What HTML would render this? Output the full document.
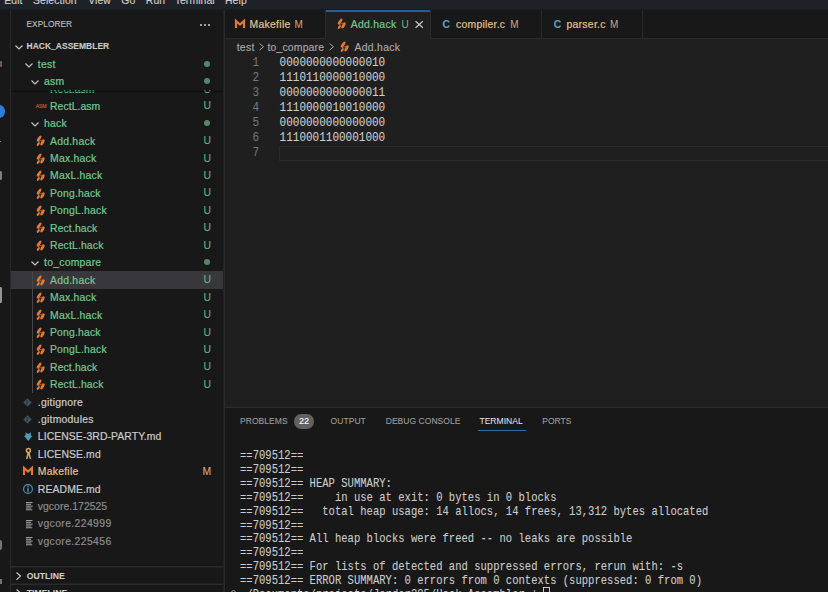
<!DOCTYPE html>
<html><head><meta charset="utf-8"><style>
*{margin:0;padding:0;box-sizing:border-box}
html,body{width:828px;height:592px;overflow:hidden;background:#181818;font-family:"Liberation Sans",sans-serif;}
.a{position:absolute}
.t{position:absolute;white-space:pre}
.mono{font-family:"Liberation Mono",monospace}
svg{position:absolute;overflow:visible}
</style></head><body>
<div class="a" style="left:0px;top:0px;width:828px;height:10px;background:#1e2125"></div>
<div class="a" style="left:0px;top:9px;width:828px;height:1px;background:#1b1d20"></div>
<div class="t" style="left:4.3px;top:-7.5px;font-size:10.4px;line-height:16px;color:#cccccc;letter-spacing:0.1px;-webkit-text-stroke:0.15px #cccccc">Edit</div>
<div class="t" style="left:33px;top:-7.5px;font-size:10.4px;line-height:16px;color:#cccccc;letter-spacing:0.1px;-webkit-text-stroke:0.15px #cccccc">Selection</div>
<div class="t" style="left:88.2px;top:-7.5px;font-size:10.4px;line-height:16px;color:#cccccc;letter-spacing:0.1px;-webkit-text-stroke:0.15px #cccccc">View</div>
<div class="t" style="left:121.3px;top:-7.5px;font-size:10.4px;line-height:16px;color:#cccccc;letter-spacing:0.1px;-webkit-text-stroke:0.15px #cccccc">Go</div>
<div class="t" style="left:145.8px;top:-7.5px;font-size:10.4px;line-height:16px;color:#cccccc;letter-spacing:0.1px;-webkit-text-stroke:0.15px #cccccc">Run</div>
<div class="t" style="left:174.7px;top:-7.5px;font-size:10.4px;line-height:16px;color:#cccccc;letter-spacing:0.1px;-webkit-text-stroke:0.15px #cccccc">Terminal</div>
<div class="t" style="left:225px;top:-7.5px;font-size:10.4px;line-height:16px;color:#cccccc;letter-spacing:0.1px;-webkit-text-stroke:0.15px #cccccc">Help</div>
<div class="a" style="left:10px;top:10px;width:1px;height:582px;background:#2b2b2b"></div>
<div class="a" style="left:0px;top:60.5px;width:1.6px;height:6.5px;background:#8a7a6a;border-radius:0 1px 1px 0;opacity:.7"></div>
<div class="a" style="left:-7.5px;top:105px;width:12.5px;height:12.5px;border-radius:50%;background:#2f7bd8"></div>
<div class="a" style="left:0px;top:141px;width:1.2px;height:1.2px;background:#c07030"></div>
<div class="a" style="left:0px;top:171.4px;width:2px;height:9px;background:#9a9a9a;border-radius:0 1.5px 1.5px 0;opacity:.8"></div>
<div class="a" style="left:0px;top:286.6px;width:2.2px;height:16.4px;background:#aaaaaa;border-radius:0 1px 1px 0;opacity:.85"></div>
<div class="a" style="left:0px;top:540px;width:2px;height:10px;background:#a89a8a;border-radius:0 3px 3px 0;opacity:.7"></div>
<div class="a" style="left:0px;top:578.5px;width:1.6px;height:5px;background:#999999;opacity:.7"></div>
<div class="a" style="left:223px;top:10px;width:1px;height:582px;background:#222222"></div>
<div class="a" style="left:224px;top:10px;width:1px;height:582px;background:#2b2b2b"></div>
<div class="t" style="left:26.5px;top:15.82px;font-size:8.3px;line-height:16px;color:#c0c0c0;letter-spacing:0.05px;-webkit-text-stroke:0.1px #c0c0c0">EXPLORER</div>
<div class="a" style="left:200.2px;top:23.6px;width:2px;height:2px;border-radius:50%;background:#cccccc"></div>
<div class="a" style="left:204.1px;top:23.6px;width:2px;height:2px;border-radius:50%;background:#cccccc"></div>
<div class="a" style="left:208px;top:23.6px;width:2px;height:2px;border-radius:50%;background:#cccccc"></div>
<svg style="left:14.6px;top:45.1px" width="8" height="4.5" viewBox="0 0 8 4.5"><path d="M0.5 0.5 L4 4 L7.5 0.5" fill="none" stroke="#c5c5c5" stroke-width="1.2"/></svg>
<div class="t" style="left:26.5px;top:38.37px;font-size:8.45px;line-height:16px;color:#cccccc;letter-spacing:0.05px;-webkit-text-stroke:0.1px #cccccc;font-weight:bold">HACK_ASSEMBLER</div>
<div class="t" style="left:50px;top:82.4px;font-size:10.4px;line-height:16px;color:#73c991;letter-spacing:0.07px;-webkit-text-stroke:0.2px #73c991">Rect.asm</div>
<div class="t" style="left:203.5px;top:81.9px;font-size:10.4px;line-height:16px;color:#73c991;-webkit-text-stroke:0.12px #73c991;opacity:.85">U</div>
<div class="t" style="left:35.8px;top:98px;font-size:5.2px;line-height:16px;color:#e37933;letter-spacing:-0.25px;-webkit-text-stroke:0.15px #e37933;opacity:.8">ASM</div>
<div class="t" style="left:50px;top:98.8px;font-size:10.4px;line-height:16px;color:#73c991;letter-spacing:0.07px;-webkit-text-stroke:0.2px #73c991">RectL.asm</div>
<div class="t" style="left:203.5px;top:98.3px;font-size:10.4px;line-height:16px;color:#73c991;-webkit-text-stroke:0.12px #73c991;opacity:.85">U</div>
<svg style="left:31px;top:122px" width="8" height="4.5" viewBox="0 0 8 4.5"><path d="M0.5 0.5 L4 4 L7.5 0.5" fill="none" stroke="#c5c5c5" stroke-width="1.2"/></svg>
<div class="t" style="left:44px;top:116.2px;font-size:10.4px;line-height:16px;color:#73c991;letter-spacing:0.25px;-webkit-text-stroke:0.2px #73c991">hack</div>
<div class="a" style="left:203.8px;top:120.1px;width:6px;height:6px;border-radius:50%;background:#73c991;opacity:.64"></div>
<svg style="left:32.9px;top:133.3px" width="16" height="16" viewBox="0 0 16 16"><g fill="#e37933"><ellipse cx="6.1" cy="5.6" rx="1.35" ry="3.5" transform="rotate(36 6.1 5.6)"/><ellipse cx="5.3" cy="11.0" rx="1.1" ry="2.2" transform="rotate(36 5.3 11.0)"/><ellipse cx="9.5" cy="9.4" rx="1.45" ry="3.4" transform="rotate(30 9.5 9.4)"/><path d="M5.0 8.7 L9.4 6.9" stroke="#e37933" stroke-width="1.0" opacity=".7"/></g></svg>
<div class="t" style="left:50px;top:133.6px;font-size:10.4px;line-height:16px;color:#73c991;letter-spacing:0.25px;-webkit-text-stroke:0.2px #73c991">Add.hack</div>
<div class="t" style="left:203.5px;top:133.1px;font-size:10.4px;line-height:16px;color:#73c991;-webkit-text-stroke:0.12px #73c991;opacity:.85">U</div>
<svg style="left:32.9px;top:150.7px" width="16" height="16" viewBox="0 0 16 16"><g fill="#e37933"><ellipse cx="6.1" cy="5.6" rx="1.35" ry="3.5" transform="rotate(36 6.1 5.6)"/><ellipse cx="5.3" cy="11.0" rx="1.1" ry="2.2" transform="rotate(36 5.3 11.0)"/><ellipse cx="9.5" cy="9.4" rx="1.45" ry="3.4" transform="rotate(30 9.5 9.4)"/><path d="M5.0 8.7 L9.4 6.9" stroke="#e37933" stroke-width="1.0" opacity=".7"/></g></svg>
<div class="t" style="left:50px;top:151px;font-size:10.4px;line-height:16px;color:#73c991;letter-spacing:0.25px;-webkit-text-stroke:0.2px #73c991">Max.hack</div>
<div class="t" style="left:203.5px;top:150.5px;font-size:10.4px;line-height:16px;color:#73c991;-webkit-text-stroke:0.12px #73c991;opacity:.85">U</div>
<svg style="left:32.9px;top:168.1px" width="16" height="16" viewBox="0 0 16 16"><g fill="#e37933"><ellipse cx="6.1" cy="5.6" rx="1.35" ry="3.5" transform="rotate(36 6.1 5.6)"/><ellipse cx="5.3" cy="11.0" rx="1.1" ry="2.2" transform="rotate(36 5.3 11.0)"/><ellipse cx="9.5" cy="9.4" rx="1.45" ry="3.4" transform="rotate(30 9.5 9.4)"/><path d="M5.0 8.7 L9.4 6.9" stroke="#e37933" stroke-width="1.0" opacity=".7"/></g></svg>
<div class="t" style="left:50px;top:168.4px;font-size:10.4px;line-height:16px;color:#73c991;letter-spacing:0.25px;-webkit-text-stroke:0.2px #73c991">MaxL.hack</div>
<div class="t" style="left:203.5px;top:167.9px;font-size:10.4px;line-height:16px;color:#73c991;-webkit-text-stroke:0.12px #73c991;opacity:.85">U</div>
<svg style="left:32.9px;top:185.5px" width="16" height="16" viewBox="0 0 16 16"><g fill="#e37933"><ellipse cx="6.1" cy="5.6" rx="1.35" ry="3.5" transform="rotate(36 6.1 5.6)"/><ellipse cx="5.3" cy="11.0" rx="1.1" ry="2.2" transform="rotate(36 5.3 11.0)"/><ellipse cx="9.5" cy="9.4" rx="1.45" ry="3.4" transform="rotate(30 9.5 9.4)"/><path d="M5.0 8.7 L9.4 6.9" stroke="#e37933" stroke-width="1.0" opacity=".7"/></g></svg>
<div class="t" style="left:50px;top:185.8px;font-size:10.4px;line-height:16px;color:#73c991;letter-spacing:0.18px;-webkit-text-stroke:0.2px #73c991">Pong.hack</div>
<div class="t" style="left:203.5px;top:185.3px;font-size:10.4px;line-height:16px;color:#73c991;-webkit-text-stroke:0.12px #73c991;opacity:.85">U</div>
<svg style="left:32.9px;top:202.9px" width="16" height="16" viewBox="0 0 16 16"><g fill="#e37933"><ellipse cx="6.1" cy="5.6" rx="1.35" ry="3.5" transform="rotate(36 6.1 5.6)"/><ellipse cx="5.3" cy="11.0" rx="1.1" ry="2.2" transform="rotate(36 5.3 11.0)"/><ellipse cx="9.5" cy="9.4" rx="1.45" ry="3.4" transform="rotate(30 9.5 9.4)"/><path d="M5.0 8.7 L9.4 6.9" stroke="#e37933" stroke-width="1.0" opacity=".7"/></g></svg>
<div class="t" style="left:50px;top:203.2px;font-size:10.4px;line-height:16px;color:#73c991;letter-spacing:0.19px;-webkit-text-stroke:0.2px #73c991">PongL.hack</div>
<div class="t" style="left:203.5px;top:202.7px;font-size:10.4px;line-height:16px;color:#73c991;-webkit-text-stroke:0.12px #73c991;opacity:.85">U</div>
<svg style="left:32.9px;top:220.3px" width="16" height="16" viewBox="0 0 16 16"><g fill="#e37933"><ellipse cx="6.1" cy="5.6" rx="1.35" ry="3.5" transform="rotate(36 6.1 5.6)"/><ellipse cx="5.3" cy="11.0" rx="1.1" ry="2.2" transform="rotate(36 5.3 11.0)"/><ellipse cx="9.5" cy="9.4" rx="1.45" ry="3.4" transform="rotate(30 9.5 9.4)"/><path d="M5.0 8.7 L9.4 6.9" stroke="#e37933" stroke-width="1.0" opacity=".7"/></g></svg>
<div class="t" style="left:50px;top:220.6px;font-size:10.4px;line-height:16px;color:#73c991;letter-spacing:0.13px;-webkit-text-stroke:0.2px #73c991">Rect.hack</div>
<div class="t" style="left:203.5px;top:220.1px;font-size:10.4px;line-height:16px;color:#73c991;-webkit-text-stroke:0.12px #73c991;opacity:.85">U</div>
<svg style="left:32.9px;top:237.7px" width="16" height="16" viewBox="0 0 16 16"><g fill="#e37933"><ellipse cx="6.1" cy="5.6" rx="1.35" ry="3.5" transform="rotate(36 6.1 5.6)"/><ellipse cx="5.3" cy="11.0" rx="1.1" ry="2.2" transform="rotate(36 5.3 11.0)"/><ellipse cx="9.5" cy="9.4" rx="1.45" ry="3.4" transform="rotate(30 9.5 9.4)"/><path d="M5.0 8.7 L9.4 6.9" stroke="#e37933" stroke-width="1.0" opacity=".7"/></g></svg>
<div class="t" style="left:50px;top:238px;font-size:10.4px;line-height:16px;color:#73c991;letter-spacing:0.15px;-webkit-text-stroke:0.2px #73c991">RectL.hack</div>
<div class="t" style="left:203.5px;top:237.5px;font-size:10.4px;line-height:16px;color:#73c991;-webkit-text-stroke:0.12px #73c991;opacity:.85">U</div>
<svg style="left:31px;top:261.2px" width="8" height="4.5" viewBox="0 0 8 4.5"><path d="M0.5 0.5 L4 4 L7.5 0.5" fill="none" stroke="#c5c5c5" stroke-width="1.2"/></svg>
<div class="t" style="left:44px;top:255.4px;font-size:10.4px;line-height:16px;color:#73c991;letter-spacing:0.25px;-webkit-text-stroke:0.2px #73c991">to_compare</div>
<div class="a" style="left:203.8px;top:259.3px;width:6px;height:6px;border-radius:50%;background:#73c991;opacity:.64"></div>
<div class="a" style="left:11px;top:271.1px;width:212px;height:18px;background:#37373c"></div>
<svg style="left:32.9px;top:272.5px" width="16" height="16" viewBox="0 0 16 16"><g fill="#e37933"><ellipse cx="6.1" cy="5.6" rx="1.35" ry="3.5" transform="rotate(36 6.1 5.6)"/><ellipse cx="5.3" cy="11.0" rx="1.1" ry="2.2" transform="rotate(36 5.3 11.0)"/><ellipse cx="9.5" cy="9.4" rx="1.45" ry="3.4" transform="rotate(30 9.5 9.4)"/><path d="M5.0 8.7 L9.4 6.9" stroke="#e37933" stroke-width="1.0" opacity=".7"/></g></svg>
<div class="t" style="left:50px;top:272.8px;font-size:10.4px;line-height:16px;color:#73c991;letter-spacing:0.25px;-webkit-text-stroke:0.2px #73c991">Add.hack</div>
<div class="t" style="left:203.5px;top:272.3px;font-size:10.4px;line-height:16px;color:#73c991;-webkit-text-stroke:0.12px #73c991;opacity:.85">U</div>
<svg style="left:32.9px;top:289.9px" width="16" height="16" viewBox="0 0 16 16"><g fill="#e37933"><ellipse cx="6.1" cy="5.6" rx="1.35" ry="3.5" transform="rotate(36 6.1 5.6)"/><ellipse cx="5.3" cy="11.0" rx="1.1" ry="2.2" transform="rotate(36 5.3 11.0)"/><ellipse cx="9.5" cy="9.4" rx="1.45" ry="3.4" transform="rotate(30 9.5 9.4)"/><path d="M5.0 8.7 L9.4 6.9" stroke="#e37933" stroke-width="1.0" opacity=".7"/></g></svg>
<div class="t" style="left:50px;top:290.2px;font-size:10.4px;line-height:16px;color:#73c991;letter-spacing:0.25px;-webkit-text-stroke:0.2px #73c991">Max.hack</div>
<div class="t" style="left:203.5px;top:289.7px;font-size:10.4px;line-height:16px;color:#73c991;-webkit-text-stroke:0.12px #73c991;opacity:.85">U</div>
<svg style="left:32.9px;top:307.3px" width="16" height="16" viewBox="0 0 16 16"><g fill="#e37933"><ellipse cx="6.1" cy="5.6" rx="1.35" ry="3.5" transform="rotate(36 6.1 5.6)"/><ellipse cx="5.3" cy="11.0" rx="1.1" ry="2.2" transform="rotate(36 5.3 11.0)"/><ellipse cx="9.5" cy="9.4" rx="1.45" ry="3.4" transform="rotate(30 9.5 9.4)"/><path d="M5.0 8.7 L9.4 6.9" stroke="#e37933" stroke-width="1.0" opacity=".7"/></g></svg>
<div class="t" style="left:50px;top:307.6px;font-size:10.4px;line-height:16px;color:#73c991;letter-spacing:0.25px;-webkit-text-stroke:0.2px #73c991">MaxL.hack</div>
<div class="t" style="left:203.5px;top:307.1px;font-size:10.4px;line-height:16px;color:#73c991;-webkit-text-stroke:0.12px #73c991;opacity:.85">U</div>
<svg style="left:32.9px;top:324.7px" width="16" height="16" viewBox="0 0 16 16"><g fill="#e37933"><ellipse cx="6.1" cy="5.6" rx="1.35" ry="3.5" transform="rotate(36 6.1 5.6)"/><ellipse cx="5.3" cy="11.0" rx="1.1" ry="2.2" transform="rotate(36 5.3 11.0)"/><ellipse cx="9.5" cy="9.4" rx="1.45" ry="3.4" transform="rotate(30 9.5 9.4)"/><path d="M5.0 8.7 L9.4 6.9" stroke="#e37933" stroke-width="1.0" opacity=".7"/></g></svg>
<div class="t" style="left:50px;top:325px;font-size:10.4px;line-height:16px;color:#73c991;letter-spacing:0.18px;-webkit-text-stroke:0.2px #73c991">Pong.hack</div>
<div class="t" style="left:203.5px;top:324.5px;font-size:10.4px;line-height:16px;color:#73c991;-webkit-text-stroke:0.12px #73c991;opacity:.85">U</div>
<svg style="left:32.9px;top:342.1px" width="16" height="16" viewBox="0 0 16 16"><g fill="#e37933"><ellipse cx="6.1" cy="5.6" rx="1.35" ry="3.5" transform="rotate(36 6.1 5.6)"/><ellipse cx="5.3" cy="11.0" rx="1.1" ry="2.2" transform="rotate(36 5.3 11.0)"/><ellipse cx="9.5" cy="9.4" rx="1.45" ry="3.4" transform="rotate(30 9.5 9.4)"/><path d="M5.0 8.7 L9.4 6.9" stroke="#e37933" stroke-width="1.0" opacity=".7"/></g></svg>
<div class="t" style="left:50px;top:342.4px;font-size:10.4px;line-height:16px;color:#73c991;letter-spacing:0.19px;-webkit-text-stroke:0.2px #73c991">PongL.hack</div>
<div class="t" style="left:203.5px;top:341.9px;font-size:10.4px;line-height:16px;color:#73c991;-webkit-text-stroke:0.12px #73c991;opacity:.85">U</div>
<svg style="left:32.9px;top:359.5px" width="16" height="16" viewBox="0 0 16 16"><g fill="#e37933"><ellipse cx="6.1" cy="5.6" rx="1.35" ry="3.5" transform="rotate(36 6.1 5.6)"/><ellipse cx="5.3" cy="11.0" rx="1.1" ry="2.2" transform="rotate(36 5.3 11.0)"/><ellipse cx="9.5" cy="9.4" rx="1.45" ry="3.4" transform="rotate(30 9.5 9.4)"/><path d="M5.0 8.7 L9.4 6.9" stroke="#e37933" stroke-width="1.0" opacity=".7"/></g></svg>
<div class="t" style="left:50px;top:359.8px;font-size:10.4px;line-height:16px;color:#73c991;letter-spacing:0.13px;-webkit-text-stroke:0.2px #73c991">Rect.hack</div>
<div class="t" style="left:203.5px;top:359.3px;font-size:10.4px;line-height:16px;color:#73c991;-webkit-text-stroke:0.12px #73c991;opacity:.85">U</div>
<svg style="left:32.9px;top:376.9px" width="16" height="16" viewBox="0 0 16 16"><g fill="#e37933"><ellipse cx="6.1" cy="5.6" rx="1.35" ry="3.5" transform="rotate(36 6.1 5.6)"/><ellipse cx="5.3" cy="11.0" rx="1.1" ry="2.2" transform="rotate(36 5.3 11.0)"/><ellipse cx="9.5" cy="9.4" rx="1.45" ry="3.4" transform="rotate(30 9.5 9.4)"/><path d="M5.0 8.7 L9.4 6.9" stroke="#e37933" stroke-width="1.0" opacity=".7"/></g></svg>
<div class="t" style="left:50px;top:377.2px;font-size:10.4px;line-height:16px;color:#73c991;letter-spacing:0.15px;-webkit-text-stroke:0.2px #73c991">RectL.hack</div>
<div class="t" style="left:203.5px;top:376.7px;font-size:10.4px;line-height:16px;color:#73c991;-webkit-text-stroke:0.12px #73c991;opacity:.85">U</div>
<div class="a" style="left:32px;top:271.7px;width:1px;height:121.8px;background:#474747"></div>
<svg style="left:23.3px;top:397.69999999999993px" width="9" height="9" viewBox="0 0 9 9"><path d="M4.5 0.3 L8.7 4.5 L4.5 8.7 L0.3 4.5 Z" fill="#41535b"/><path d="M3.6 2.2 L5.2 3.8 M4.0 3.6 L4.0 6.6" stroke="#1a1a1a" stroke-width="0.8" fill="none"/></svg>
<div class="t" style="left:37.8px;top:394.6px;font-size:10.4px;line-height:16px;color:#cccccc;letter-spacing:0.25px;-webkit-text-stroke:0.2px #cccccc">.gitignore</div>
<svg style="left:23.3px;top:415.09999999999997px" width="9" height="9" viewBox="0 0 9 9"><path d="M4.5 0.3 L8.7 4.5 L4.5 8.7 L0.3 4.5 Z" fill="#41535b"/><path d="M3.6 2.2 L5.2 3.8 M4.0 3.6 L4.0 6.6" stroke="#1a1a1a" stroke-width="0.8" fill="none"/></svg>
<div class="t" style="left:37.8px;top:412px;font-size:10.4px;line-height:16px;color:#cccccc;letter-spacing:0.25px;-webkit-text-stroke:0.2px #cccccc">.gitmodules</div>
<svg style="left:23.7px;top:431.99999999999994px" width="8.4" height="9" viewBox="0 0 8.4 9"><path d="M1.6 0.2 L4.2 2.0 L6.8 0.2 L6.9 3.6 L8.3 4.0 L4.2 8.9 L0.1 4.0 L1.5 3.6 Z" fill="#519aba"/></svg>
<div class="t" style="left:37.8px;top:429.4px;font-size:10.4px;line-height:16px;color:#cccccc;letter-spacing:0.09px;-webkit-text-stroke:0.2px #cccccc">LICENSE-3RD-PARTY.md</div>
<svg style="left:24.5px;top:448.2px" width="7" height="12" viewBox="0 0 7 12"><circle cx="3.4" cy="2.6" r="2.0" fill="none" stroke="#d2a862" stroke-width="1.5"/><path d="M2.4 4.4 L0.9 11.4 L2.8 10.6 L3.6 6.8 L4.6 10.6 L6.3 11.4 L4.6 4.4 Z" fill="#d2a862"/></svg>
<div class="t" style="left:37.8px;top:446.8px;font-size:10.4px;line-height:16px;color:#cccccc;letter-spacing:0.12px;-webkit-text-stroke:0.2px #cccccc">LICENSE.md</div>
<svg style="left:23.2px;top:467.3px" width="10" height="8" viewBox="0 0 10 8"><path d="M1 7.9 L1 0.9 L5 4.6 L9 0.9 L9 7.9" fill="none" stroke="#e37933" stroke-width="2.1" stroke-linejoin="miter"/></svg>
<div class="t" style="left:37.8px;top:464.2px;font-size:10.4px;line-height:16px;color:#e2c08d;letter-spacing:0.25px;-webkit-text-stroke:0.2px #e2c08d">Makefile</div>
<div class="t" style="left:202.6px;top:463.7px;font-size:10.4px;line-height:16px;color:#e2c08d;-webkit-text-stroke:0.12px #e2c08d;opacity:.85">M</div>
<svg style="left:22.8px;top:483.79999999999995px" width="10" height="10" viewBox="0 0 10 10"><circle cx="5" cy="5" r="4.4" fill="none" stroke="#519aba" stroke-width="1.1"/><rect x="4.3" y="4.2" width="1.4" height="3.6" fill="#519aba"/><rect x="4.3" y="2.1" width="1.4" height="1.3" fill="#519aba"/></svg>
<div class="t" style="left:37.8px;top:481.6px;font-size:10.4px;line-height:16px;color:#cccccc;letter-spacing:0.12px;-webkit-text-stroke:0.2px #cccccc">README.md</div>
<svg style="left:26.2px;top:502.29999999999995px" width="7" height="8.5" viewBox="0 0 7 8.5" fill="#9a9a9a"><rect x="0" y="0" width="6.5" height="1.1"/><rect x="0" y="1.8" width="5" height="1.1"/><rect x="0" y="3.6" width="6.7" height="1.1"/><rect x="0" y="5.4" width="5.3" height="1.1"/><rect x="0" y="7.2" width="6.2" height="1.1"/></svg>
<div class="t" style="left:37.8px;top:499px;font-size:10.4px;line-height:16px;color:#8c8c8c;letter-spacing:0.05px;-webkit-text-stroke:0.2px #8c8c8c">vgcore.172525</div>
<svg style="left:26.2px;top:519.6999999999999px" width="7" height="8.5" viewBox="0 0 7 8.5" fill="#9a9a9a"><rect x="0" y="0" width="6.5" height="1.1"/><rect x="0" y="1.8" width="5" height="1.1"/><rect x="0" y="3.6" width="6.7" height="1.1"/><rect x="0" y="5.4" width="5.3" height="1.1"/><rect x="0" y="7.2" width="6.2" height="1.1"/></svg>
<div class="t" style="left:37.8px;top:516.4px;font-size:10.4px;line-height:16px;color:#8c8c8c;letter-spacing:0.39px;-webkit-text-stroke:0.2px #8c8c8c">vgcore.224999</div>
<svg style="left:26.2px;top:537.0999999999999px" width="7" height="8.5" viewBox="0 0 7 8.5" fill="#9a9a9a"><rect x="0" y="0" width="6.5" height="1.1"/><rect x="0" y="1.8" width="5" height="1.1"/><rect x="0" y="3.6" width="6.7" height="1.1"/><rect x="0" y="5.4" width="5.3" height="1.1"/><rect x="0" y="7.2" width="6.2" height="1.1"/></svg>
<div class="t" style="left:37.8px;top:533.8px;font-size:10.4px;line-height:16px;color:#8c8c8c;letter-spacing:0.39px;-webkit-text-stroke:0.2px #8c8c8c">vgcore.225456</div>
<div class="a" style="left:11px;top:55px;width:212px;height:35px;background:#181818"></div>
<div class="a" style="left:11px;top:91px;width:212px;height:1px;background:#0a0a0a;opacity:.55"></div>
<div class="a" style="left:11px;top:90px;width:212px;height:1px;background:#0a0a0a;opacity:.2"></div>
<svg style="left:24.8px;top:62.5px" width="8" height="4.5" viewBox="0 0 8 4.5"><path d="M0.5 0.5 L4 4 L7.5 0.5" fill="none" stroke="#c5c5c5" stroke-width="1.2"/></svg>
<div class="t" style="left:37.8px;top:56.7px;font-size:10.4px;line-height:16px;color:#73c991;letter-spacing:0.25px;-webkit-text-stroke:0.2px #73c991">test</div>
<div class="a" style="left:203.8px;top:60.6px;width:6px;height:6px;border-radius:50%;background:#73c991;opacity:.64"></div>
<svg style="left:31px;top:79.8px" width="8" height="4.5" viewBox="0 0 8 4.5"><path d="M0.5 0.5 L4 4 L7.5 0.5" fill="none" stroke="#c5c5c5" stroke-width="1.2"/></svg>
<div class="t" style="left:44px;top:74px;font-size:10.4px;line-height:16px;color:#73c991;letter-spacing:0.25px;-webkit-text-stroke:0.2px #73c991">asm</div>
<div class="a" style="left:203.8px;top:77.9px;width:6px;height:6px;border-radius:50%;background:#73c991;opacity:.64"></div>
<div class="a" style="left:11px;top:566px;width:212px;height:1px;background:#2b2b2b"></div>
<div class="a" style="left:11px;top:567px;width:212px;height:1px;background:#202020"></div>
<svg style="left:16.3px;top:571.7px" width="5" height="8.2" viewBox="0 0 5 8.2"><path d="M0.5 0.5 L4.5 4.1 L0.5 7.7" fill="none" stroke="#c5c5c5" stroke-width="1.2"/></svg>
<div class="t" style="left:26.7px;top:567.82px;font-size:8.6px;line-height:16px;color:#cccccc;letter-spacing:0.05px;-webkit-text-stroke:0.1px #cccccc;font-weight:bold">OUTLINE</div>
<div class="a" style="left:11px;top:583px;width:212px;height:1px;background:#202020"></div>
<div class="a" style="left:11px;top:584px;width:212px;height:1px;background:#2b2b2b"></div>
<svg style="left:16.3px;top:588.6px" width="5" height="8.2" viewBox="0 0 5 8.2"><path d="M0.5 0.5 L4.5 4.1 L0.5 7.7" fill="none" stroke="#c5c5c5" stroke-width="1.2"/></svg>
<div class="t" style="left:26.7px;top:584.72px;font-size:8.6px;line-height:16px;color:#cccccc;letter-spacing:0.05px;-webkit-text-stroke:0.1px #cccccc;font-weight:bold">TIMELINE</div>
<div class="a" style="left:225px;top:10px;width:604px;height:397.5px;background:#1f1f1f"></div>
<div class="a" style="left:225px;top:10px;width:604px;height:27.7px;background:#181818"></div>
<div class="a" style="left:225px;top:38px;width:604px;height:1px;background:#2b2b2b"></div>
<div class="a" style="left:325px;top:10px;width:1px;height:28px;background:#2b2b2b"></div>
<div class="a" style="left:430px;top:10px;width:1px;height:28px;background:#2b2b2b"></div>
<div class="a" style="left:541px;top:10px;width:1px;height:28px;background:#2b2b2b"></div>
<div class="a" style="left:642px;top:10px;width:1px;height:28px;background:#2b2b2b"></div>
<svg style="left:234.7px;top:19.7px" width="10" height="8" viewBox="0 0 10 8"><path d="M1 7.9 L1 0.9 L5 4.6 L9 0.9 L9 7.9" fill="none" stroke="#e37933" stroke-width="2.2" stroke-linejoin="miter"/></svg>
<div class="t" style="left:249.5px;top:16.7px;font-size:10.4px;line-height:16px;color:#e2c08d;letter-spacing:0.3px;-webkit-text-stroke:0.2px #e2c08d">Makefile</div>
<div class="t" style="left:294.6px;top:16.84px;font-size:10px;line-height:16px;color:#e2c08d;-webkit-text-stroke:0.02px #e2c08d;opacity:.85">M</div>
<div class="a" style="left:326px;top:10px;width:104px;height:29px;background:#1f1f1f"></div>
<div class="a" style="left:326px;top:10px;width:104px;height:2px;background:#2d5b92"></div>
<svg style="left:334px;top:16.2px" width="16" height="16" viewBox="0 0 16 16"><g fill="#e37933"><ellipse cx="6.1" cy="5.6" rx="1.35" ry="3.5" transform="rotate(36 6.1 5.6)"/><ellipse cx="5.3" cy="11.0" rx="1.1" ry="2.2" transform="rotate(36 5.3 11.0)"/><ellipse cx="9.5" cy="9.4" rx="1.45" ry="3.4" transform="rotate(30 9.5 9.4)"/><path d="M5.0 8.7 L9.4 6.9" stroke="#e37933" stroke-width="1.0" opacity=".7"/></g></svg>
<div class="t" style="left:350.7px;top:16.7px;font-size:10.4px;line-height:16px;color:#73c991;letter-spacing:0.3px;-webkit-text-stroke:0.2px #73c991">Add.hack</div>
<div class="t" style="left:401.5px;top:16.84px;font-size:10px;line-height:16px;color:#73c991;-webkit-text-stroke:0.02px #73c991;opacity:.9">U</div>
<svg style="left:415px;top:21px" width="8.4" height="7" viewBox="0 0 8.4 7"><path d="M0.6 0.3 L7.8 6.7 M7.8 0.3 L0.6 6.7" stroke="#cccccc" stroke-width="1.15"/></svg>
<div class="t" style="left:442.4px;top:16.7px;font-size:10.4px;line-height:16px;color:#5aa2c8;-webkit-text-stroke:0.05px #5aa2c8;font-weight:bold">C</div>
<div class="t" style="left:456px;top:16.7px;font-size:10.4px;line-height:16px;color:#e2c08d;letter-spacing:0.25px;-webkit-text-stroke:0.2px #e2c08d">compiler.c</div>
<div class="t" style="left:510.2px;top:16.84px;font-size:10px;line-height:16px;color:#e2c08d;-webkit-text-stroke:0.02px #e2c08d;opacity:.85">M</div>
<div class="t" style="left:553.8px;top:16.7px;font-size:10.4px;line-height:16px;color:#5aa2c8;-webkit-text-stroke:0.05px #5aa2c8;font-weight:bold">C</div>
<div class="t" style="left:566.4px;top:16.7px;font-size:10.4px;line-height:16px;color:#e2c08d;letter-spacing:0.3px;-webkit-text-stroke:0.2px #e2c08d">parser.c</div>
<div class="t" style="left:609.9px;top:16.84px;font-size:10px;line-height:16px;color:#e2c08d;-webkit-text-stroke:0.02px #e2c08d;opacity:.85">M</div>
<div class="t" style="left:236.7px;top:39.6px;font-size:10.4px;line-height:16px;color:#a9a9a9;letter-spacing:0.3px;-webkit-text-stroke:0.15px #a9a9a9">test</div>
<svg style="left:258.6px;top:43.3px" width="5" height="7.6" viewBox="0 0 5 7.6"><path d="M0.5 0.5 L4.5 3.8 L0.5 7.1" fill="none" stroke="#a9a9a9" stroke-width="0.95"/></svg>
<div class="t" style="left:267.5px;top:39.6px;font-size:10.4px;line-height:16px;color:#a9a9a9;letter-spacing:0.18px;-webkit-text-stroke:0.15px #a9a9a9">to_compare</div>
<svg style="left:328.6px;top:43.3px" width="5" height="7.6" viewBox="0 0 5 7.6"><path d="M0.5 0.5 L4.5 3.8 L0.5 7.1" fill="none" stroke="#a9a9a9" stroke-width="0.95"/></svg>
<svg style="left:337px;top:39.4px" width="16" height="16" viewBox="0 0 16 16"><g fill="#e37933"><ellipse cx="6.1" cy="5.6" rx="1.35" ry="3.5" transform="rotate(36 6.1 5.6)"/><ellipse cx="5.3" cy="11.0" rx="1.1" ry="2.2" transform="rotate(36 5.3 11.0)"/><ellipse cx="9.5" cy="9.4" rx="1.45" ry="3.4" transform="rotate(30 9.5 9.4)"/><path d="M5.0 8.7 L9.4 6.9" stroke="#e37933" stroke-width="1.0" opacity=".7"/></g></svg>
<div class="t" style="left:354.5px;top:39.6px;font-size:10.4px;line-height:16px;color:#a9a9a9;letter-spacing:0.3px;-webkit-text-stroke:0.15px #a9a9a9">Add.hack</div>
<div class="t mono" style="left:233px;top:54.87px;font-size:11px;line-height:16px;color:#6e7681;-webkit-text-stroke:0.08px #6e7681;width:26px;text-align:right;transform:scaleY(1.13);transform-origin:0 10.93px">1</div>
<div class="t mono" style="left:279.6px;top:54.87px;font-size:11px;line-height:16px;color:#cccccc;-webkit-text-stroke:0.08px #cccccc;transform:scaleY(1.13);transform-origin:0 10.93px">0000000000000010</div>
<div class="t mono" style="left:233px;top:69.87px;font-size:11px;line-height:16px;color:#6e7681;-webkit-text-stroke:0.08px #6e7681;width:26px;text-align:right;transform:scaleY(1.13);transform-origin:0 10.93px">2</div>
<div class="t mono" style="left:279.6px;top:69.87px;font-size:11px;line-height:16px;color:#cccccc;-webkit-text-stroke:0.08px #cccccc;transform:scaleY(1.13);transform-origin:0 10.93px">1110110000010000</div>
<div class="t mono" style="left:233px;top:84.87px;font-size:11px;line-height:16px;color:#6e7681;-webkit-text-stroke:0.08px #6e7681;width:26px;text-align:right;transform:scaleY(1.13);transform-origin:0 10.93px">3</div>
<div class="t mono" style="left:279.6px;top:84.87px;font-size:11px;line-height:16px;color:#cccccc;-webkit-text-stroke:0.08px #cccccc;transform:scaleY(1.13);transform-origin:0 10.93px">0000000000000011</div>
<div class="t mono" style="left:233px;top:99.87px;font-size:11px;line-height:16px;color:#6e7681;-webkit-text-stroke:0.08px #6e7681;width:26px;text-align:right;transform:scaleY(1.13);transform-origin:0 10.93px">4</div>
<div class="t mono" style="left:279.6px;top:99.87px;font-size:11px;line-height:16px;color:#cccccc;-webkit-text-stroke:0.08px #cccccc;transform:scaleY(1.13);transform-origin:0 10.93px">1110000010010000</div>
<div class="t mono" style="left:233px;top:114.87px;font-size:11px;line-height:16px;color:#6e7681;-webkit-text-stroke:0.08px #6e7681;width:26px;text-align:right;transform:scaleY(1.13);transform-origin:0 10.93px">5</div>
<div class="t mono" style="left:279.6px;top:114.87px;font-size:11px;line-height:16px;color:#cccccc;-webkit-text-stroke:0.08px #cccccc;transform:scaleY(1.13);transform-origin:0 10.93px">0000000000000000</div>
<div class="t mono" style="left:233px;top:129.87px;font-size:11px;line-height:16px;color:#6e7681;-webkit-text-stroke:0.08px #6e7681;width:26px;text-align:right;transform:scaleY(1.13);transform-origin:0 10.93px">6</div>
<div class="t mono" style="left:279.6px;top:129.87px;font-size:11px;line-height:16px;color:#cccccc;-webkit-text-stroke:0.08px #cccccc;transform:scaleY(1.13);transform-origin:0 10.93px">1110001100001000</div>
<div class="t mono" style="left:233px;top:144.87px;font-size:11px;line-height:16px;color:#6e7681;-webkit-text-stroke:0.08px #6e7681;width:26px;text-align:right;transform:scaleY(1.13);transform-origin:0 10.93px">7</div>
<div class="a" style="left:279.3px;top:145.9px;width:560px;height:14.8px;border:1px solid #2a2a2a"></div>
<div class="a" style="left:225px;top:407px;width:604px;height:1px;background:#2b2b2b"></div>
<div class="a" style="left:225px;top:408px;width:604px;height:184px;background:#181818"></div>
<div class="t" style="left:240px;top:413.15px;font-size:8.5px;line-height:16px;color:#9d9d9d;letter-spacing:0.05px;-webkit-text-stroke:0.1px #9d9d9d">PROBLEMS</div>
<div class="a" style="left:294.4px;top:414.3px;width:19.4px;height:14.5px;border-radius:7.25px;background:#616161"></div>
<div class="t" style="left:294.4px;top:412.91px;font-size:9.2px;line-height:16px;color:#ffffff;-webkit-text-stroke:0.1px #ffffff;width:19.4px;text-align:center">22</div>
<div class="t" style="left:330.6px;top:413.15px;font-size:8.5px;line-height:16px;color:#9d9d9d;letter-spacing:0.05px;-webkit-text-stroke:0.1px #9d9d9d">OUTPUT</div>
<div class="t" style="left:385.7px;top:413.15px;font-size:8.5px;line-height:16px;color:#9d9d9d;letter-spacing:0.05px;-webkit-text-stroke:0.1px #9d9d9d">DEBUG CONSOLE</div>
<div class="t" style="left:479.4px;top:413.15px;font-size:8.5px;line-height:16px;color:#e7e7e7;letter-spacing:0.05px;-webkit-text-stroke:0.02px #e7e7e7">TERMINAL</div>
<div class="a" style="left:478px;top:430px;width:47.5px;height:1px;background:#3a679c"></div>
<div class="t" style="left:542.2px;top:413.15px;font-size:8.5px;line-height:16px;color:#9d9d9d;letter-spacing:0.05px;-webkit-text-stroke:0.1px #9d9d9d">PORTS</div>
<div class="t mono" style="left:240px;top:448.29px;font-size:10.55px;line-height:16px;color:#cccccc;-webkit-text-stroke:0.08px #cccccc;transform:scaleY(1.17);transform-origin:0 10.81px">==709512==</div>
<div class="t mono" style="left:240px;top:462.14px;font-size:10.55px;line-height:16px;color:#cccccc;-webkit-text-stroke:0.08px #cccccc;transform:scaleY(1.17);transform-origin:0 10.81px">==709512==</div>
<div class="t mono" style="left:240px;top:475.99px;font-size:10.55px;line-height:16px;color:#cccccc;-webkit-text-stroke:0.08px #cccccc;transform:scaleY(1.17);transform-origin:0 10.81px">==709512== HEAP SUMMARY:</div>
<div class="t mono" style="left:240px;top:489.84px;font-size:10.55px;line-height:16px;color:#cccccc;-webkit-text-stroke:0.08px #cccccc;transform:scaleY(1.17);transform-origin:0 10.81px">==709512==     in use at exit: 0 bytes in 0 blocks</div>
<div class="t mono" style="left:240px;top:503.69px;font-size:10.55px;line-height:16px;color:#cccccc;-webkit-text-stroke:0.08px #cccccc;transform:scaleY(1.17);transform-origin:0 10.81px">==709512==   total heap usage: 14 allocs, 14 frees, 13,312 bytes allocated</div>
<div class="t mono" style="left:240px;top:517.54px;font-size:10.55px;line-height:16px;color:#cccccc;-webkit-text-stroke:0.08px #cccccc;transform:scaleY(1.17);transform-origin:0 10.81px">==709512==</div>
<div class="t mono" style="left:240px;top:531.39px;font-size:10.55px;line-height:16px;color:#cccccc;-webkit-text-stroke:0.08px #cccccc;transform:scaleY(1.17);transform-origin:0 10.81px">==709512== All heap blocks were freed -- no leaks are possible</div>
<div class="t mono" style="left:240px;top:545.24px;font-size:10.55px;line-height:16px;color:#cccccc;-webkit-text-stroke:0.08px #cccccc;transform:scaleY(1.17);transform-origin:0 10.81px">==709512==</div>
<div class="t mono" style="left:240px;top:559.09px;font-size:10.55px;line-height:16px;color:#cccccc;-webkit-text-stroke:0.08px #cccccc;transform:scaleY(1.17);transform-origin:0 10.81px">==709512== For lists of detected and suppressed errors, rerun with: -s</div>
<div class="t mono" style="left:240px;top:572.94px;font-size:10.55px;line-height:16px;color:#cccccc;-webkit-text-stroke:0.08px #cccccc;transform:scaleY(1.17);transform-origin:0 10.81px">==709512== ERROR SUMMARY: 0 errors from 0 contexts (suppressed: 0 from 0)</div>
<div class="t mono" style="left:240px;top:586.79px;font-size:10.55px;line-height:16px;color:#cccccc;-webkit-text-stroke:0.08px #cccccc;transform:scaleY(1.17);transform-origin:0 10.81px">~/Documents/projects/Jarder285/Hack-Assembler ± </div>
<div class="a" style="left:230.8px;top:590.3px;width:5.4px;height:5.4px;border-radius:50%;border:1px solid #8a8a8a"></div>
<div class="a" style="left:543.3px;top:586.6px;width:6.3px;height:10px;border:1px solid #cccccc"></div>
</body></html>
